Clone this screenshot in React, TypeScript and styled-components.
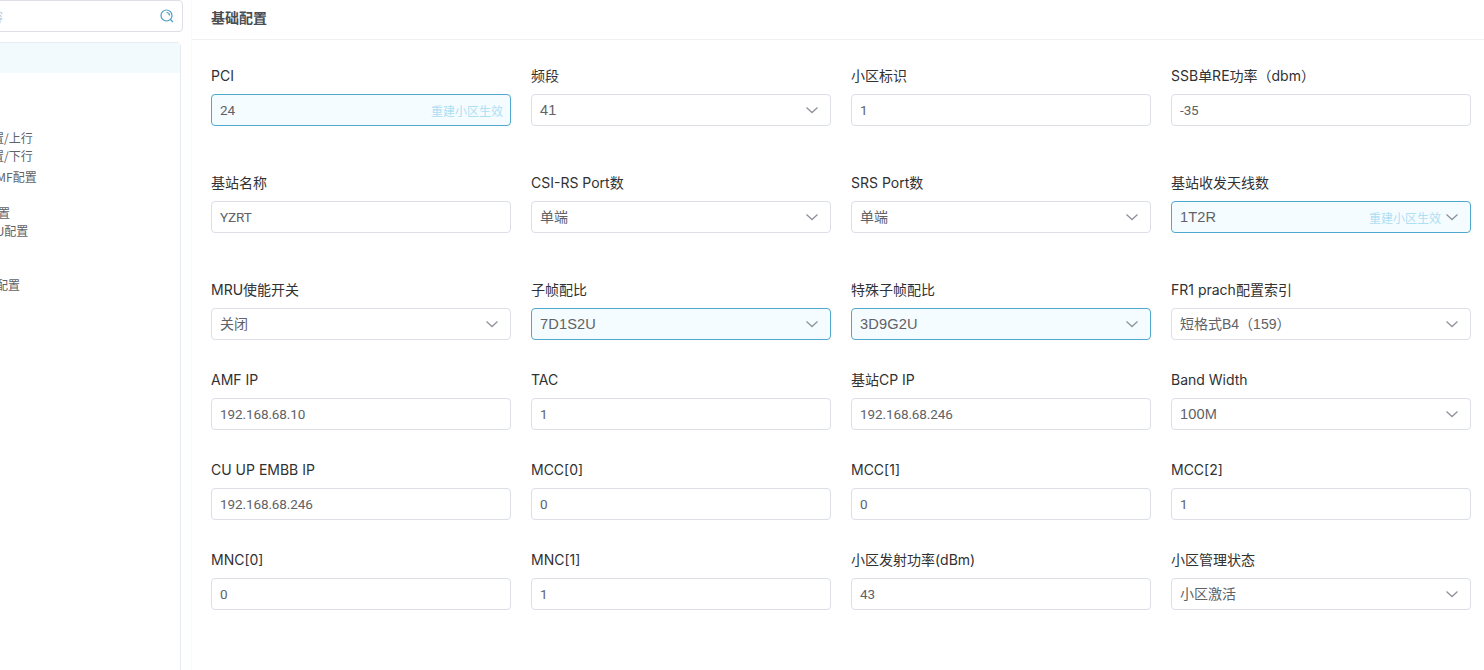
import React from "react";
import styled, { createGlobalStyle } from "styled-components";

const Global = createGlobalStyle`
  html, body { margin: 0; padding: 0; background: #fff; overflow: hidden; }
  body { font-family: "Liberation Sans", "Noto Sans CJK SC", sans-serif; }
`;
const Page = styled.div`
  display: flex;
  width: 1484px;
  height: 670px;
  overflow: hidden;
  background: #fff;
`;
const Sidebar = styled.aside`
  flex: none;
  width: 283px;
  margin-left: -100px;
  margin-right: 8px;
  display: flex;
  flex-direction: column;
`;
const Search = styled.div`
  height: 32px;
  box-sizing: border-box;
  border: 1px solid #dcdfe6;
  border-radius: 4px;
  display: flex;
  align-items: center;
  justify-content: space-between;
  padding: 0 7px 0 54px;
  font-size: 12px;
  color: #c0c4cc;
`;
const Tree = styled.div`
  flex: 1;
  margin: 10px 2px -10px 0;
  border: 1px solid #e6ebf2;
  border-radius: 4px;
  font-family: "Noto Sans CJK SC", sans-serif;
  font-size: 12px;
  color: #606266;
`;
const SelectedRow = styled.div`
  height: 30px;
  background: #f3fafe;
  margin-bottom: 56px;
`;
const TreeRow = styled.div<{ $indent: number; $top: number }>`
  height: 18px;
  line-height: 18px;
  white-space: nowrap;
  padding-left: ${(p) => p.$indent}px;
  margin-top: ${(p) => p.$top}px;
`;
const Main = styled.main`
  flex: 1;
  min-width: 0;
  border-left: 1px solid #fafafa;
`;
const Header = styled.header`
  height: 39px;
  line-height: 36px;
  padding-left: 19px;
  border-bottom: 1px solid #f0f0f0;
  font-size: 14px;
  font-weight: 700;
  color: #4a4d52;
`;
const Form = styled.div`
  padding: 25px 13px 0 19px;
`;
const Row = styled.div<{ $after: number }>`
  display: grid;
  grid-template-columns: repeat(4, 300px);
  column-gap: 20px;
  margin-bottom: ${(p) => p.$after}px;
`;
const Label = styled.div`
  height: 22px;
  line-height: 22px;
  margin-bottom: 7px;
  font-family: Inter, "Noto Sans CJK SC", sans-serif;
  font-size: 14px;
  color: #303133;
  white-space: nowrap;
`;
const Control = styled.div<{ $hot?: boolean }>`
  height: 32px;
  box-sizing: border-box;
  display: flex;
  align-items: center;
  padding: 0 7px 0 8px;
  border: 1px solid ${(p) => (p.$hot ? "#4fa9cf" : "#dcdfe6")};
  border-radius: 4px;
  background: ${(p) => (p.$hot ? "#f5fcff" : "#fff")};
  color: #606266;
`;
const InputValue = styled.span`
  flex: 1;
  font-family: Roboto, sans-serif;
  font-size: 13.5px;
  letter-spacing: -0.1px;
`;
const SelectValue = styled.span<{ $latin?: boolean }>`
  flex: 1;
  position: relative;
  top: ${(p) => (p.$latin ? 0 : -1)}px;
  font-family: "Liberation Sans", "Noto Sans CJK SC", sans-serif;
  font-size: ${(p) => (p.$latin ? "14.6px" : "14px")};
  letter-spacing: ${(p) => (p.$latin ? "0.15px" : "0")};
`;
const Hint = styled.span`
  font-size: 12px;
  color: #aedff3;
`;
const Chevron = styled.svg`
  flex: none;
  width: 14px;
  height: 14px;
  margin: 0 4px 0 4px;
  color: #909399;
`;

type Item = { label: string; value: string; select?: boolean; hot?: boolean; hint?: boolean };

const rows: { after: number; items: Item[] }[] = [
  { after: 46, items: [
    { label: "PCI", value: "24", hot: true, hint: true },
    { label: "频段", value: "41", select: true },
    { label: "小区标识", value: "1" },
    { label: "SSB单RE功率（dbm）", value: "-35" },
  ]},
  { after: 46, items: [
    { label: "基站名称", value: "YZRT" },
    { label: "CSI-RS Port数", value: "单端", select: true },
    { label: "SRS Port数", value: "单端", select: true },
    { label: "基站收发天线数", value: "1T2R", select: true, hot: true, hint: true },
  ]},
  { after: 29, items: [
    { label: "MRU使能开关", value: "关闭", select: true },
    { label: "子帧配比", value: "7D1S2U", select: true, hot: true },
    { label: "特殊子帧配比", value: "3D9G2U", select: true, hot: true },
    { label: "FR1 prach配置索引", value: "短格式B4（159）", select: true },
  ]},
  { after: 29, items: [
    { label: "AMF IP", value: "192.168.68.10" },
    { label: "TAC", value: "1" },
    { label: "基站CP IP", value: "192.168.68.246" },
    { label: "Band Width", value: "100M", select: true },
  ]},
  { after: 29, items: [
    { label: "CU UP EMBB IP", value: "192.168.68.246" },
    { label: "MCC[0]", value: "0" },
    { label: "MCC[1]", value: "0" },
    { label: "MCC[2]", value: "1" },
  ]},
  { after: 0, items: [
    { label: "MNC[0]", value: "0" },
    { label: "MNC[1]", value: "1" },
    { label: "小区发射功率(dBm)", value: "43" },
    { label: "小区管理状态", value: "小区激活", select: true },
  ]},
];

const treeRows = [
  { text: "时隙配置/上行", indent: 55, top: 0 },
  { text: "时隙配置/下行", indent: 55, top: 0 },
  { text: "AMF配置", indent: 88, top: 3 },
  { text: "基站配置", indent: 61, top: 18 },
  { text: "CU/DU配置", indent: 66, top: 0 },
  { text: "小区配置", indent: 71, top: 36 },
];

const isLatin = (s: string) => /^[\x00-\x7f]+$/.test(s);

function Field({ item }: { item: Item }) {
  return (
    <div>
      <Label>{item.label}</Label>
      <Control $hot={item.hot}>
        {item.select ? (
          <SelectValue $latin={isLatin(item.value)}>{item.value}</SelectValue>
        ) : (
          <InputValue>{item.value}</InputValue>
        )}
        {item.hint && <Hint>重建小区生效</Hint>}
        {item.select && (
          <Chevron viewBox="0 0 14 14" fill="none" stroke="currentColor" strokeWidth="1.3">
            <path d="M1.5 4.5 7 9.5l5.5-5" />
          </Chevron>
        )}
      </Control>
    </div>
  );
}

export default function App() {
  return (
    <Page>
      <Global />
      <Sidebar>
        <Search>
          <span>搜索内容</span>
          <svg width="16" height="16" viewBox="0 0 16 16" fill="none" stroke="#4a9cc0" strokeWidth="1.2">
            <circle cx="7.5" cy="7.5" r="5.5" />
            <path d="M7.5 4.5a3 3 0 0 1 3 3M11.5 11.5l2.5 2.5" />
          </svg>
        </Search>
        <Tree>
          <SelectedRow />
          {treeRows.map((r) => (
            <TreeRow key={r.text} $indent={r.indent} $top={r.top}>{r.text}</TreeRow>
          ))}
        </Tree>
      </Sidebar>
      <Main>
        <Header>基础配置</Header>
        <Form>
          {rows.map((r, i) => (
            <Row key={i} $after={r.after}>
              {r.items.map((it) => <Field key={it.label} item={it} />)}
            </Row>
          ))}
        </Form>
      </Main>
    </Page>
  );
}
